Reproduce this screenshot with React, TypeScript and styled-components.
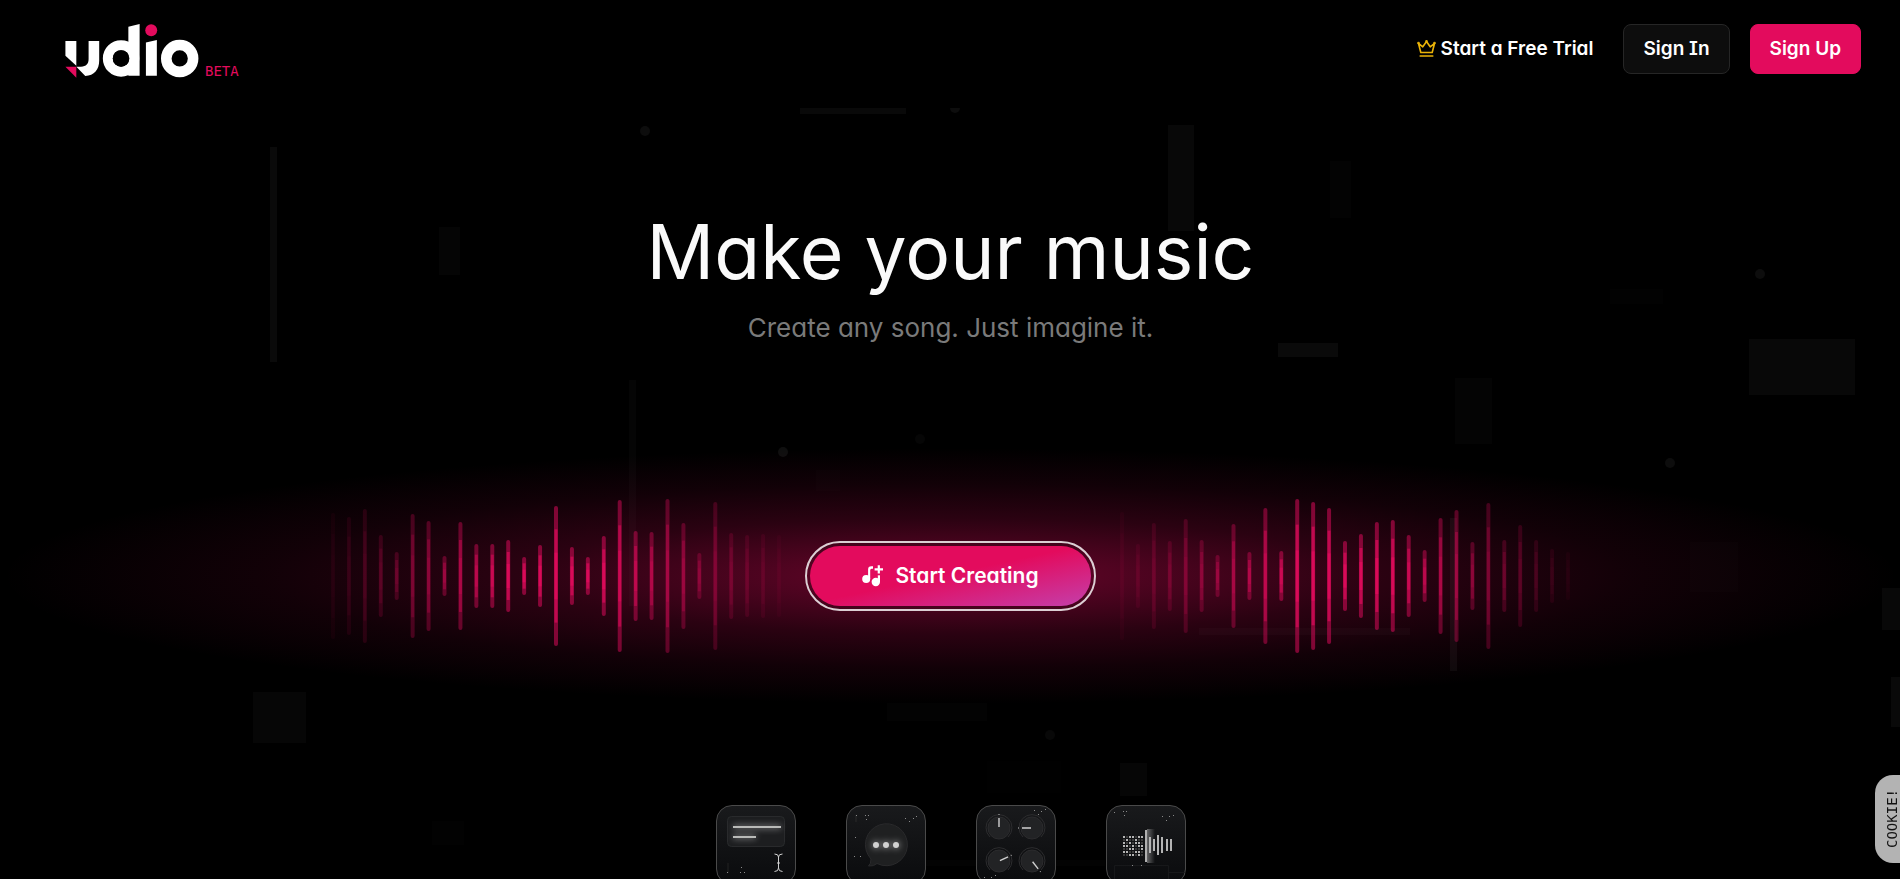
import React from 'react';
import styled, { createGlobalStyle } from 'styled-components';

const PINK = '#e30b5d';
const SANS = 'Inter, "Open Sans", sans-serif';
const MONO = '"DejaVu Sans Mono", "Liberation Mono", monospace';

const GlobalStyle = createGlobalStyle`
  *, *::before, *::after { box-sizing: border-box; }
  body {
    margin: 0;
    background: #000;
    color: #fff;
    font-family: ${SANS};
    font-feature-settings: "cv11", "cv08";
  }
`;

const Page = styled.div`
  position: relative;
  height: 100vh;
  overflow: hidden;
  background: #000;
`;

const Backdrop = styled.svg`
  position: absolute;
  top: 0;
  left: 0;
  width: 100%;
  pointer-events: none;
`;

const Header = styled.header`
  position: relative;
  display: flex;
  align-items: flex-start;
  justify-content: space-between;
  height: 108px;
  padding: 24px 39px 0 65px;
`;

const Brand = styled.a`
  display: flex;
  align-items: flex-end;
  gap: 6px;
  color: ${PINK};
  text-decoration: none;
`;

const Beta = styled.span`
  font: 14px/14px ${MONO};
`;

const Nav = styled.nav`
  display: flex;
  align-items: center;
  gap: 20px;
`;

const TrialLink = styled.a`
  display: flex;
  align-items: center;
  gap: 5px;
  margin-right: 10px;
  color: #fff;
  font-size: 19px;
  font-weight: 600;
  line-height: 24px;
  text-decoration: none;
`;

const NavButton = styled.button<{ $primary?: boolean }>`
  height: 50px;
  padding: 0 19px;
  border: 1px solid ${p => (p.$primary ? PINK : '#262626')};
  border-radius: 8px;
  background: ${p => (p.$primary ? PINK : '#0d0d0d')};
  color: #fff;
  font: 600 19px/24px ${SANS};
  font-feature-settings: inherit;
  cursor: pointer;
`;

const Hero = styled.main`
  position: relative;
  display: flex;
  flex-direction: column;
  align-items: center;
  padding-left: 1px;
`;

const Title = styled.h1`
  margin: 98px 0 0;
  color: #fafafa;
  font-size: 75px;
  font-weight: 400;
  line-height: 92px;
`;

const Subtitle = styled.p`
  margin: 14px 0 0;
  color: #7a7a7a;
  font-size: 26px;
  line-height: 32px;
`;

const Stage = styled.section`
  display: flex;
  align-items: center;
  justify-content: center;
  gap: 24px;
  width: 100%;
  height: 256px;
  margin-top: 104px;
  background: radial-gradient(
    ellipse closest-side,
    rgba(227, 11, 93, 0.46) 0%,
    rgba(227, 11, 93, 0.34) 20%,
    rgba(227, 11, 93, 0.19) 45%,
    rgba(227, 11, 93, 0.08) 72%,
    rgba(227, 11, 93, 0) 100%
  );
`;

const CreateRing = styled.div`
  flex: none;
  width: 291px;
  padding: 3px;
  border: 2px solid #dccfd4;
  border-radius: 35px;
`;

const CreateButton = styled.button`
  display: flex;
  align-items: center;
  justify-content: center;
  gap: 11px;
  width: 100%;
  height: 60px;
  border: 0;
  border-radius: 30px;
  background: linear-gradient(168deg, ${PINK} 48%, #c43fab 100%);
  color: #fff;
  font: 600 21px/24px ${SANS};
  font-feature-settings: inherit;
  cursor: pointer;
`;

const Features = styled.ul`
  display: flex;
  gap: 50px;
  margin: 101px 0 0;
  padding: 0;
  list-style: none;
`;

const Feature = styled.li`
  width: 80px;
  height: 80px;
  border: 1px solid #4a4a4a;
  border-radius: 16px;
  background: linear-gradient(#191a1c, #0a0b0d);
  overflow: hidden;

  svg {
    display: block;
    margin: -1px;
  }
`;

const CookieTab = styled.button`
  position: absolute;
  right: 0;
  bottom: 16px;
  width: 25px;
  height: 88px;
  padding: 0 0 0 9px;
  border: 0;
  border-radius: 18px 0 0 18px;
  background: #b3b3b3;
  color: #111;
  font: 14px/16px ${MONO};
  overflow: hidden;
  cursor: pointer;

  span {
    display: block;
    writing-mode: vertical-rl;
    transform: rotate(180deg);
  }
`;

/* x, y, width, height, opacity */
const BLOCKS: number[][] = [
  [270, 147, 7, 215, 0.04], [439, 227, 21, 48, 0.02], [800, 108, 106, 6, 0.035],
  [629, 380, 7, 226, 0.018], [253, 692, 53, 51, 0.025], [432, 821, 32, 24, 0.008],
  [887, 703, 100, 18, 0.012], [816, 470, 24, 21, 0.008], [1168, 125, 26, 106, 0.03],
  [1330, 161, 21, 57, 0.01], [1610, 289, 53, 15, 0.008], [1278, 343, 60, 14, 0.04],
  [1749, 339, 106, 56, 0.03], [1455, 378, 37, 66, 0.016], [1199, 628, 211, 7, 0.018],
  [1450, 518, 7, 153, 0.04], [1690, 542, 48, 50, 0.008], [1882, 588, 18, 42, 0.03],
  [1891, 677, 9, 50, 0.035], [1120, 763, 27, 33, 0.025], [987, 761, 74, 32, 0.004],
  [925, 860, 180, 6, 0.012],
];

/* cx, cy, opacity */
const DOTS: number[][] = [
  [645, 131, 0.05], [783, 452, 0.06], [920, 439, 0.025],
  [1760, 274, 0.05], [1670, 463, 0.05], [1050, 735, 0.03],
];

/* half of each bar's height */
const LEFT_BARS = [
  63, 59, 67, 41, 24, 62, 55, 20, 54, 32, 32, 36, 19, 31, 70,
  29, 19, 40, 76, 45, 44, 77, 53, 23, 74, 43, 41, 42, 41,
];
const RIGHT_BARS = [
  64, 32, 53, 35, 57, 36, 21, 52, 24, 68, 25, 77, 74, 68, 35,
  42, 54, 56, 41, 26, 58, 66, 34, 73, 36, 51, 36, 27, 24,
];

function Wave({ bars }: { bars: number[] }) {
  return (
    <svg width="450" height="160" viewBox="0 0 450 160" aria-hidden="true">
      {bars.map((half, i) => {
        const x = 2 + (i * 446) / 28;
        const opacity = Math.min(1, (15 - Math.abs(i - 14)) / 12);
        return (
          <g key={i} opacity={opacity}>
            <rect x={x - 2} y={80 - half} width="4" height={half * 2} rx="2" fill="#e30b5d" opacity="0.52" />
            <rect x={x - 1.5} y={80 - half * 0.667} width="3" height={half * 1.333} fill="#e30b5d" opacity="0.62" />
            <rect x={x - 1.5} y={80 - half * 0.333} width="3" height={half * 0.667} fill="#e30b5d" opacity="0.7" />
          </g>
        );
      })}
    </svg>
  );
}

function Logo() {
  return (
    <svg width="134" height="54" viewBox="75 42 402 163" role="img" aria-label="udio">
      <path d="M75 93H108V168L75 138Z" fill="#fff" />
      <path d="M75 171H108V204Z" fill={PINK} />
      <path d="M145 93H177V152C177 180 162 197 135 199L108 171H122C138 171 145 162 145 148Z" fill="#fff" />
      <circle cx="243" cy="146" r="40" fill="none" stroke="#fff" strokeWidth="30" />
      <path d="M265 50L299 42V198H265Z" fill="#fff" />
      <circle cx="243" cy="146" r="25" fill="#000" />
      <circle cx="334" cy="61" r="18" fill={PINK} />
      <path d="M318 98L351 90V198H318Z" fill="#fff" />
      <circle cx="420" cy="146" r="40.500" fill="none" stroke="#fff" strokeWidth="32" />
    </svg>
  );
}

function CrownIcon() {
  return (
    <svg width="19" height="18" viewBox="0 0 19 18" fill="none" stroke="#eab308" strokeWidth="1.600" strokeLinejoin="round" strokeLinecap="round" aria-hidden="true">
      <path d="M1.500 3.500L5.800 6.800L9.500 1.500L13.200 6.800L17.500 3.500L15.200 12.500H3.800Z" />
      <path d="M3.200 16H15.800" />
      <circle cx="1.500" cy="3" r=".5" />
      <circle cx="9.500" cy="1.300" r=".5" />
      <circle cx="17.500" cy="3" r=".5" />
    </svg>
  );
}

function SongPlusIcon() {
  return (
    <svg width="22" height="22" viewBox="0 0 22 22" fill="#fff" aria-hidden="true">
      <circle cx="4.200" cy="14" r="4" />
      <path d="M6.100 14V4.500Q6.100 1.300 9.300 1.300H11V3.700H9.500Q8.200 3.700 8.200 5.200V14Z" />
      <circle cx="13.800" cy="17" r="4.200" />
      <path d="M15.800 10.300H18V17H15.800Z" />
      <path d="M15.700 .3H17.900V3.300H21V5.500H17.900V8.500H15.700V5.500H12.600V3.300H15.700Z" />
    </svg>
  );
}

function Specks({ at }: { at: number[][] }) {
  return (
    <g fill="#8a8a8a">
      {at.map(([x, y], i) => <rect key={i} x={x} y={y} width="1" height="1" />)}
    </g>
  );
}

function GlowFilter({ id }: { id: string }) {
  return (
    <filter id={id} x="-50%" y="-200%" width="200%" height="500%" filterUnits="userSpaceOnUse">
      <feGaussianBlur stdDeviation="3" />
    </filter>
  );
}

function PromptArt() {
  return (
    <svg width="80" height="80" viewBox="0 0 80 80" aria-hidden="true">
      <GlowFilter id="promptGlow" />
      <rect x="11.500" y="11.500" width="57" height="30" rx="4" fill="#1d1e20" stroke="#292a2c" />
      <g filter="url(#promptGlow)" opacity=".4" fill="#fff">
        <rect x="17" y="20" width="48" height="4" />
        <rect x="17" y="30" width="23" height="4" />
      </g>
      <rect x="17" y="21" width="48" height="2" fill="#b9bab8" />
      <rect x="17" y="31" width="23" height="2" fill="#b9bab8" />
      <path d="M58.500 49Q62.500 49 62.500 52V63Q62.500 66.500 58.500 66.500M66.500 49Q62.500 49 62.500 52M62.500 63Q62.500 66.500 66.500 66.500M61 58H64" fill="none" stroke="#d0d0d0" />
      <path d="M12 58V68" stroke="#222" />
      <Specks at={[[11, 67], [25, 62], [24, 67], [28, 67]]} />
    </svg>
  );
}

function ChatArt() {
  return (
    <svg width="80" height="80" viewBox="0 0 80 80" aria-hidden="true">
      <GlowFilter id="chatGlow" />
      <path d="M25 54Q25 59 22.500 61Q28 61.500 31 58.500A21 21 0 1 0 25 54Z" fill="#1f2021" stroke="#2a2a2c" />
      <g fill="#fff" opacity=".4" filter="url(#chatGlow)">
        <circle cx="30" cy="40" r="4" /><circle cx="40" cy="40" r="4" /><circle cx="50" cy="40" r="4" />
      </g>
      <g fill="#d2d2d2">
        <circle cx="30" cy="40" r="3" /><circle cx="40" cy="40" r="3" /><circle cx="50" cy="40" r="3" />
      </g>
      <path d="M10 10V17" stroke="#2a2a2a" />
      <Specks at={[[10, 10], [19, 10], [22, 10], [20, 14], [59, 13], [63, 16], [67, 13], [70, 11], [9, 32], [8, 51], [14, 51]]} />
    </svg>
  );
}

function KnobsArt() {
  const knobs = [[23, 23, 0], [56, 23, -90], [23, 56, 65], [56, 56, 142]];
  return (
    <svg width="80" height="80" viewBox="0 0 80 80" fill="none" aria-hidden="true">
      {knobs.map(([x, y, turn]) => (
        <g key={`${x}-${y}`}>
          <path d={`M${x - 9} ${y + 9}A13 13 0 1 1 ${x + 9} ${y + 9}`} stroke="#2d2d2f" />
          <circle cx={x} cy={y} r="11" fill="#222325" stroke="#2c2c2e" />
          <g transform={`rotate(${turn} ${x} ${y})`}>
            <path d={`M${x} ${y - 1}V${y - 10}`} stroke="#d0d0d0" strokeWidth="1.400" />
            <rect x={x - 0.5} y={y - 14} width="1" height="1" fill="#bbb" />
          </g>
        </g>
      ))}
      <Specks at={[[58, 5], [62, 9], [65, 6], [69, 4], [8, 72], [15, 72], [19, 70]]} />
    </svg>
  );
}

function RemixArt() {
  const rows = ['1011011', '0100100', '1010110', '1101011', '0011001', '1100110', '0011010'];
  const lines = [[44, 8], [48, 6], [52, 10], [56, 8], [61, 6], [65, 6]];
  return (
    <svg width="80" height="80" viewBox="0 0 80 80" aria-hidden="true">
      <defs>
        <linearGradient id="remixGlow">
          <stop offset="0" stopColor="#fff" stopOpacity=".35" />
          <stop offset="1" stopColor="#fff" stopOpacity="0" />
        </linearGradient>
      </defs>
      {rows.map((row, y) => row.split('').map((on, x) => (
        <rect key={`${x}-${y}`} x={17 + x * 3} y={31 + y * 3} width="2" height="2" fill={on === '1' ? '#b4b4b4' : '#3c3c3c'} />
      )))}
      <rect x="41" y="24" width="8" height="34" fill="url(#remixGlow)" />
      <rect x="39" y="25" width="2" height="32" fill="#b0b0b0" />
      {lines.map(([x, half]) => (
        <rect key={x} x={x - 1} y={40 - half} width="2" height={half * 2} fill="#b4b4b4" />
      ))}
      <path d="M8.500 80V60.500H62.500V80M62 67.500H80" stroke="#17181a" fill="none" />
      <Specks at={[[8, 7], [17, 6], [20, 6], [18, 10], [56, 11], [60, 15], [63, 11], [67, 10], [26, 60], [35, 60]]} />
    </svg>
  );
}

export default function App() {
  return (
    <Page>
      <GlobalStyle />
      <Backdrop viewBox="0 0 1900 879" aria-hidden="true">
        {BLOCKS.map(([x, y, w, h, o], i) => (
          <rect key={i} x={x} y={y} width={w} height={h} fill="#fff" opacity={o} />
        ))}
        {DOTS.map(([x, y, o], i) => (
          <circle key={i} cx={x} cy={y} r="5" fill="#fff" opacity={o} />
        ))}
        <path d="M950 108A5 5 0 0 0 960 108Z" fill="#fff" opacity="0.05" />
      </Backdrop>
      <Header>
        <Brand href="#">
          <Logo />
          <Beta>BETA</Beta>
        </Brand>
        <Nav>
          <TrialLink href="#trial">
            <CrownIcon />
            Start a Free Trial
          </TrialLink>
          <NavButton type="button">Sign In</NavButton>
          <NavButton type="button" $primary>Sign Up</NavButton>
        </Nav>
      </Header>
      <Hero>
        <Title>Make your music</Title>
        <Subtitle>Create any song. Just imagine it.</Subtitle>
        <Stage>
          <Wave bars={LEFT_BARS} />
          <CreateRing>
            <CreateButton type="button">
              <SongPlusIcon />
              Start Creating
            </CreateButton>
          </CreateRing>
          <Wave bars={RIGHT_BARS} />
        </Stage>
        <Features>
          <Feature><PromptArt /></Feature>
          <Feature><ChatArt /></Feature>
          <Feature><KnobsArt /></Feature>
          <Feature><RemixArt /></Feature>
        </Features>
      </Hero>
      <CookieTab type="button"><span>COOKIE!</span></CookieTab>
    </Page>
  );
}
